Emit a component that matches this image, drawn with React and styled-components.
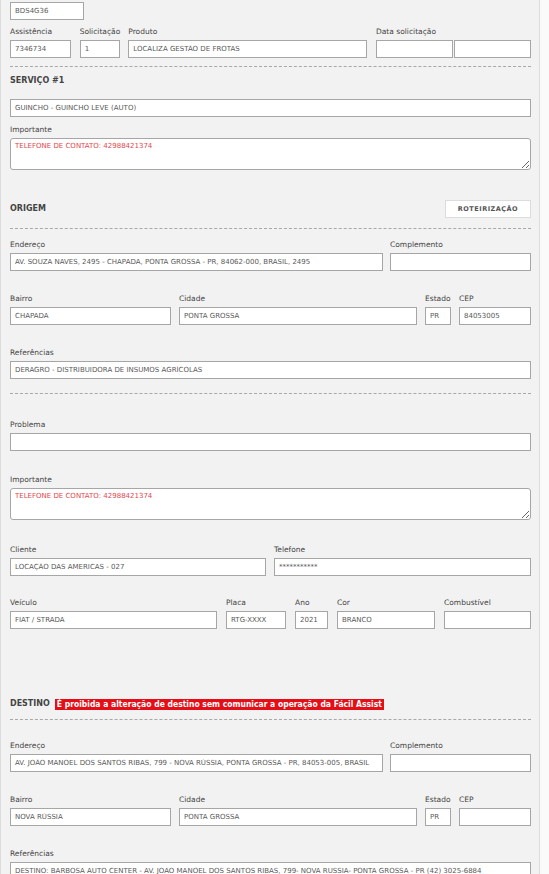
import React from "react";
import styled, { createGlobalStyle } from "styled-components";

const GlobalStyle = createGlobalStyle`
  body {
    margin: 0;
    background: #fafafa;
    font-family: "DejaVu Sans", Verdana, sans-serif;
  }
`;

const Panel = styled.div`
  width: 540px;
  box-sizing: border-box;
  background: #f2f2f2;
  border: 1px solid #dcdcdc;
  border-top: none;
  padding: 2px 8px 60px 9px;
`;

const Row = styled.div`
  display: flex;
  justify-content: space-between;
  align-items: flex-end;
  margin-top: ${(p) => p.$mt || 0}px;
`;

const Field = styled.div`
  flex: none;
  width: ${(p) => (p.$w ? `${p.$w}px` : "100%")};
`;

const Label = styled.div`
  font-size: 7.5px;
  line-height: 12px;
  height: 12px;
  margin-bottom: 2px;
  color: #444;
  white-space: nowrap;
`;

const Input = styled.input`
  display: block;
  box-sizing: border-box;
  width: 100%;
  height: 18px;
  margin: 0;
  padding: 0 4px;
  border: 1px solid #a6a6a6;
  border-radius: 0;
  background: #fff;
  font-family: "DejaVu Sans", Verdana, sans-serif;
  font-size: 7px;
  color: #595959;
  outline: none;
`;

const DatePair = styled.div`
  display: flex;
  gap: 1px;
`;

const TextArea = styled.textarea`
  display: block;
  box-sizing: border-box;
  width: 100%;
  height: 32px;
  margin: 0;
  padding: 3px 4px;
  border: 1px solid #a6a6a6;
  border-radius: 3px;
  background: #fff;
  font-family: "DejaVu Sans", Verdana, sans-serif;
  font-size: 7px;
  color: #e2474c;
  resize: vertical;
  outline: none;
`;

const Dashed = styled.hr`
  height: 0;
  border: 0;
  border-top: 1px dashed #a8a8a8;
  margin: ${(p) => p.$mt || 0}px 0 0;
`;

const SectionHead = styled.div`
  display: flex;
  align-items: center;
  justify-content: space-between;
  min-height: 12px;
  margin-top: ${(p) => p.$mt || 0}px;
`;

const HeadLeft = styled.div`
  display: flex;
  align-items: center;
`;

const HeadTitle = styled.span`
  font-weight: bold;
  font-size: 8px;
  line-height: 12px;
  color: #444;
`;

const Alert = styled.span`
  margin-left: 5px;
  padding: 0 2px;
  background: #e60d16;
  color: #fff;
  font-family: "DejaVu Sans Condensed", "DejaVu Sans", sans-serif;
  font-weight: bold;
  font-size: 8.5px;
  line-height: 11px;
  white-space: nowrap;
`;

const RouteButton = styled.button`
  width: 86px;
  height: 18px;
  padding: 0;
  border: 1px solid #dcdcdc;
  background: #fff;
  color: #555;
  font-family: "DejaVu Sans", Verdana, sans-serif;
  font-weight: bold;
  font-size: 6.5px;
  letter-spacing: 0.5px;
  cursor: pointer;
`;

function TextField({ label, value = "", w }) {
  return (
    <Field $w={w}>
      {label && <Label>{label}</Label>}
      <Input readOnly value={value} />
    </Field>
  );
}

function AreaField({ label, value }) {
  return (
    <Field>
      <Label>{label}</Label>
      <TextArea readOnly value={value} />
    </Field>
  );
}

function Address({ first, endereco, bairro, cidade, estado, cep, referencias }) {
  return (
    <>
      <Row $mt={first}>
        <TextField w={373} label="Endereço" value={endereco} />
        <TextField w={141} label="Complemento" />
      </Row>
      <Row $mt={22}>
        <TextField w={161} label="Bairro" value={bairro} />
        <TextField w={238} label="Cidade" value={cidade} />
        <TextField w={26} label="Estado" value={estado} />
        <TextField w={72} label="CEP" value={cep} />
      </Row>
      <Row $mt={referencias.gap}>
        <TextField label="Referências" value={referencias.value} />
      </Row>
    </>
  );
}

export default function App() {
  return (
    <Panel>
      <GlobalStyle />
      <Row>
        <TextField w={74} value="BDS4G36" />
      </Row>
      <Row $mt={6}>
        <TextField w={61} label="Assistência" value="7346734" />
        <TextField w={40} label="Solicitação" value="1" />
        <TextField w={239} label="Produto" value="LOCALIZA GESTÃO DE FROTAS" />
        <Field $w={155}>
          <Label>Data solicitação</Label>
          <DatePair>
            <Input readOnly value="" />
            <Input readOnly value="" />
          </DatePair>
        </Field>
      </Row>

      <Dashed $mt={8} />
      <SectionHead $mt={8}>
        <HeadTitle>SERVIÇO #1</HeadTitle>
      </SectionHead>
      <Row $mt={12}>
        <TextField value="GUINCHO - GUINCHO LEVE (AUTO)" />
      </Row>
      <Row $mt={7}>
        <AreaField label="Importante" value="TELEFONE DE CONTATO: 42988421374" />
      </Row>

      <SectionHead $mt={30}>
        <HeadTitle>ORIGEM</HeadTitle>
        <RouteButton>ROTEIRIZAÇÃO</RouteButton>
      </SectionHead>
      <Dashed $mt={10} />
      <Address
        first={10}
        endereco="AV. SOUZA NAVES, 2495 - CHAPADA, PONTA GROSSA - PR, 84062-000, BRASIL, 2495"
        bairro="CHAPADA"
        cidade="PONTA GROSSA"
        estado="PR"
        cep="84053005"
        referencias={{ gap: 22, value: "DERAGRO - DISTRIBUIDORA DE INSUMOS AGRÍCOLAS" }}
      />
      <Dashed $mt={14} />

      <Row $mt={25}>
        <TextField label="Problema" />
      </Row>
      <Row $mt={23}>
        <AreaField label="Importante" value="TELEFONE DE CONTATO: 42988421374" />
      </Row>
      <Row $mt={24}>
        <TextField w={256} label="Cliente" value="LOCAÇÃO DAS AMERICAS - 027" />
        <TextField w={257} label="Telefone" value="***********" />
      </Row>
      <Row $mt={21}>
        <TextField w={207} label="Veículo" value="FIAT / STRADA" />
        <TextField w={60} label="Placa" value="RTG-XXXX" />
        <TextField w={33} label="Ano" value="2021" />
        <TextField w={98} label="Cor" value="BRANCO" />
        <TextField w={87} label="Combustível" />
      </Row>

      <SectionHead $mt={69}>
        <HeadLeft>
          <HeadTitle>DESTINO</HeadTitle>
          <Alert>É proibida a alteração de destino sem comunicar a operação da Fácil Assist</Alert>
        </HeadLeft>
      </SectionHead>
      <Dashed $mt={9} />
      <Address
        first={20}
        endereco="AV. JOÃO MANOEL DOS SANTOS RIBAS, 799 - NOVA RÚSSIA, PONTA GROSSA - PR, 84053-005, BRASIL"
        bairro="NOVA RÚSSIA"
        cidade="PONTA GROSSA"
        estado="PR"
        cep=""
        referencias={{
          gap: 22,
          value:
            "DESTINO: BARBOSA AUTO CENTER - AV. JOAO MANOEL DOS SANTOS RIBAS, 799- NOVA RUSSIA- PONTA GROSSA - PR (42) 3025-6884",
        }}
      />
    </Panel>
  );
}
